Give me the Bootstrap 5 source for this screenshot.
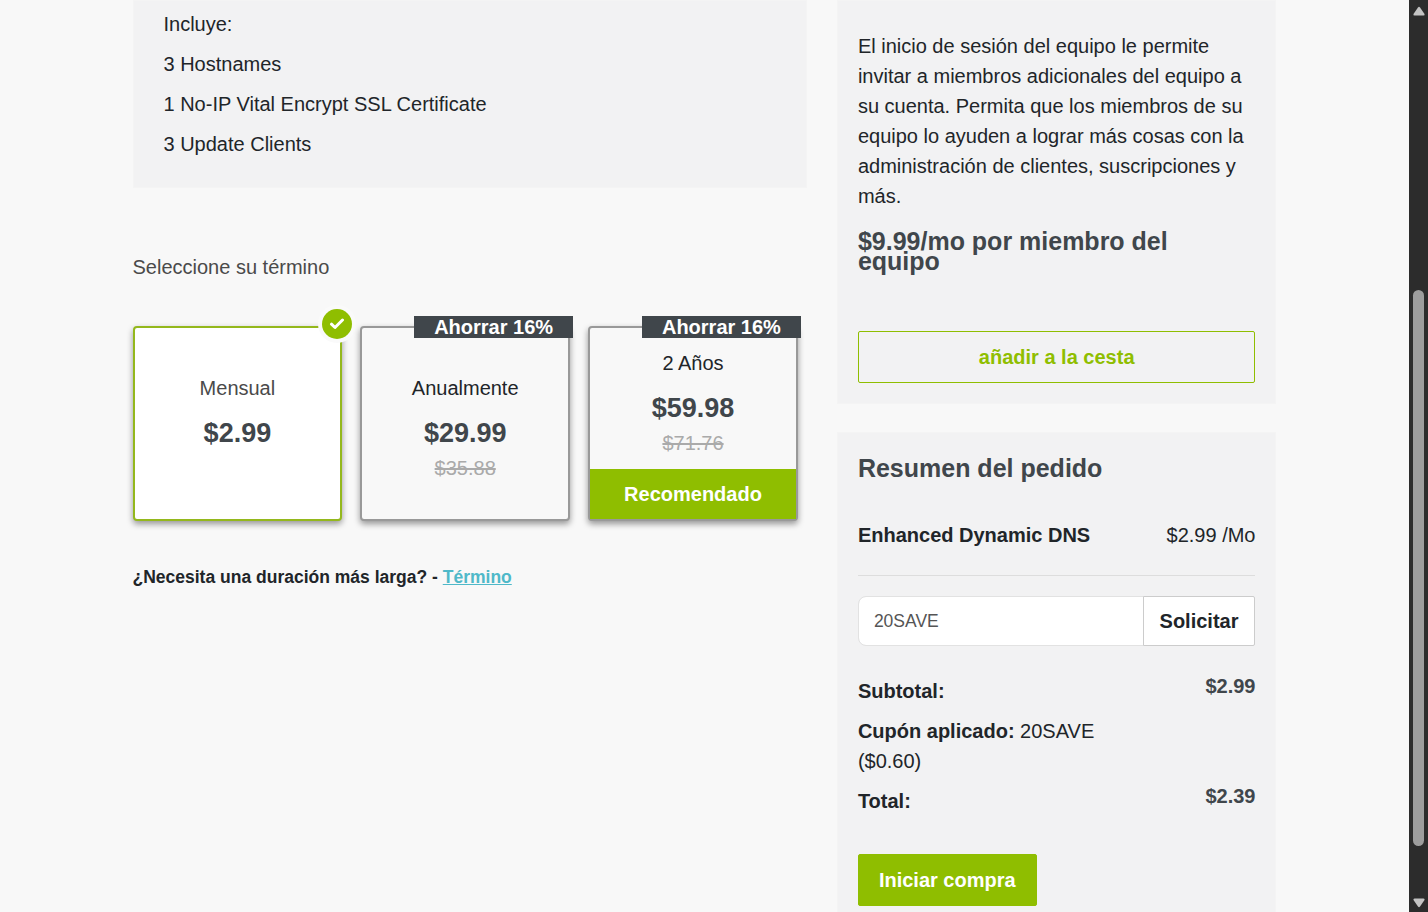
<!DOCTYPE html>
<html lang="es">
<head>
<meta charset="utf-8">
<meta name="viewport" content="width=device-width, initial-scale=1">
<title>Resumen del pedido</title>
<link href="https://cdn.jsdelivr.net/npm/bootstrap@5.3.0/dist/css/bootstrap.min.css" rel="stylesheet">
<style>
  :root { --leaf: #8fbe00; --slate: #40464b; --ink: #212529; }
  body { background: #f8f8f8; color: var(--ink); font: 20px/30px "Liberation Sans", Arial, sans-serif; }
  p { margin-bottom: 10px; }
  legend { font-size: 20px; }
  .checkout { max-width: 1174px; --bs-gutter-x: 30px; }
  .checkout > .row { --bs-gutter-x: 30px; }
  .main-column { width: 60%; }
  .side-column { width: 40%; }
  .panel { background: #f2f2f3; border: 1px solid #f4f4f4; }
  .plan-panel { padding: 8px 30px 18px; margin-bottom: 64px; }
  .side-panel { padding: 0 20px 20px; }
  .team-panel { padding-top: 30px; margin-bottom: 28px; }
  .order-panel { padding-top: 20px; }
  .slate { color: var(--slate); }
  .muted-ink { color: #4a4a4a; }
  .heading { font-size: 25px; line-height: 30px; font-weight: 700; color: var(--slate); margin: 0; }
  .team-price { line-height: 20px; padding: 10px 0 0; margin-bottom: 60px; }

  .terms { gap: 18px; padding-right: 9px; padding-top: 44px; }
  .term { flex: 1 1 0; min-height: 195px; border: 2px solid #999; border-radius: 4px;
          background: #f8f8f8; box-shadow: 0 3px 6px rgba(0,0,0,.4); cursor: pointer; }
  .term-simple { padding-top: 9px; }
  .term.chosen { border-color: #94b81c; background: #fff; }
  .term .price { font-size: 27px; font-weight: 700; line-height: 30px; color: var(--slate); margin: 15px 0 6px; }
  .term .was { color: #aaa; line-height: 29px; }
  .saving { top: -12px; right: -5px; padding: 0 20px; background: var(--slate); color: #fff; font-weight: 700; line-height: 22px; }
  .tick { top: -19px; right: -12px; width: 30px; height: 30px; border-radius: 50%; background: var(--leaf); box-shadow: 0 0 0 4px #fafafa; }
  .recommended { background: var(--leaf); color: #fff; font-weight: 700; line-height: 50px; }
  .longer { margin-top: 41px; }
  .longer a { color: #4fb9c9; }

  .btn { --bs-btn-font-size: 20px; --bs-btn-font-weight: 700; --bs-btn-line-height: 30px; --bs-btn-padding-y: 10px; --bs-btn-padding-x: 20px; --bs-btn-border-radius: 2px; }
  .btn-leaf { --bs-btn-color: #fff; --bs-btn-bg: var(--leaf); --bs-btn-border-color: var(--leaf); }
  .btn-leaf-line { --bs-btn-color: var(--leaf); --bs-btn-border-color: var(--leaf); }
  .btn-apply { --bs-btn-color: var(--ink); --bs-btn-bg: #fff; --bs-btn-border-color: #ccc; --bs-btn-padding-x: 16px; --bs-btn-padding-y: 9px; }
  .order-line { margin-top: 37px; padding-bottom: 25px; border-bottom: 1px solid #ddd; }
  .coupon { margin: 20px 0 25px; }
  .coupon .form-control { font-size: .875em; color: #555; padding: 9px 15px; border-color: #e2e2e2; border-radius: 8px; }
  .totals { margin-bottom: 33px; }
  .totals p { padding: 5px 0; margin: 0; }

  .scroll-rail { width: 19px; background: #2c2c2c; padding: 6px 0 4px; }
  .scroll-thumb { width: 11px; height: 61vh; border-radius: 6px; background: #9d9d9d; margin-bottom: 52px; }
</style>
</head>
<body>
<div class="d-flex vh-100 overflow-hidden">
  <main class="flex-grow-1 overflow-hidden">
    <div class="container-fluid checkout">
      <div class="row">
        <div class="main-column">
          <section class="panel plan-panel">
            <p>Incluye:</p>
            <p>3 Hostnames</p>
            <p>1 No-IP Vital Encrypt SSL Certificate</p>
            <p>3 Update Clients</p>
          </section>
          <fieldset>
            <legend class="mb-0 muted-ink">Seleccione su término</legend>
            <div class="terms d-flex text-center">
              <label class="term term-simple chosen position-relative d-flex flex-column justify-content-center">
                <input class="visually-hidden" type="radio" name="term" checked>
                <span class="tick position-absolute d-flex align-items-center justify-content-center">
                  <svg width="16" height="12" viewBox="0 0 16 12" fill="none" stroke="#fff" stroke-width="3" stroke-linecap="round" stroke-linejoin="round" aria-hidden="true"><path d="M2.5 6.2 6 9.5 13.5 2"/></svg>
                </span>
                <span class="muted-ink">Mensual</span>
                <span class="price">$2.99</span>
                <span class="was" aria-hidden="true">&nbsp;</span>
              </label>
              <label class="term term-simple position-relative d-flex flex-column justify-content-center">
                <input class="visually-hidden" type="radio" name="term">
                <span class="saving position-absolute">Ahorrar 16%</span>
                <span>Anualmente</span>
                <span class="price">$29.99</span>
                <del class="was">$35.88</del>
              </label>
              <label class="term position-relative d-flex flex-column">
                <input class="visually-hidden" type="radio" name="term">
                <span class="saving position-absolute">Ahorrar 16%</span>
                <span class="flex-grow-1 d-flex flex-column justify-content-center pt-2">
                  <span>2 Años</span>
                  <span class="price">$59.98</span>
                  <del class="was">$71.76</del>
                </span>
                <span class="recommended">Recomendado</span>
              </label>
            </div>
          </fieldset>
          <p class="longer small fw-bold">¿Necesita una duración más larga? - <a href="#">Término</a></p>
        </div>

        <div class="side-column">
          <section class="panel side-panel team-panel">
            <p>El inicio de sesión del equipo le permite invitar a miembros adicionales del equipo a su cuenta. Permita que los miembros de su equipo lo ayuden a lograr más cosas con la administración de clientes, suscripciones y más.</p>
            <h2 class="heading team-price">$9.99/mo por miembro del equipo</h2>
            <button class="btn btn-leaf-line w-100" type="button">añadir a la cesta</button>
          </section>

          <section class="panel side-panel order-panel">
            <h2 class="heading">Resumen del pedido</h2>
            <div class="order-line d-flex justify-content-between"><strong>Enhanced Dynamic DNS</strong><span>$2.99 /Mo</span></div>
            <form class="coupon input-group">
              <input class="form-control" type="text" value="20SAVE" aria-label="Cupón">
              <button class="btn btn-apply" type="button">Solicitar</button>
            </form>
            <div class="totals">
              <div class="d-flex justify-content-between"><p><strong>Subtotal:</strong></p><strong class="slate">$2.99</strong></div>
              <p class="w-75"><strong>Cupón aplicado:</strong> 20SAVE<br>($0.60)</p>
              <div class="d-flex justify-content-between"><p><strong>Total:</strong></p><strong class="slate">$2.39</strong></div>
            </div>
            <button class="btn btn-leaf" type="button">Iniciar compra</button>
          </section>
        </div>
      </div>
    </div>
  </main>
  <div class="scroll-rail flex-shrink-0 d-flex flex-column align-items-center" aria-hidden="true">
    <svg width="12" height="10" viewBox="0 0 12 10" fill="#c4c4c4"><path d="M5 1.500Q6 .2 7 1.500L11.500 8Q12 9.500 10.500 9.500H1.500Q0 9.500 .5 8Z"/></svg>
    <div class="scroll-thumb mt-auto"></div>
    <svg width="12" height="10" viewBox="0 0 12 10" fill="#c4c4c4"><path d="M5 8.500Q6 9.800 7 8.500L11.500 2Q12 .5 10.500 .5H1.500Q0 .5 .5 2Z"/></svg>
  </div>
</div>
<script src="https://cdn.jsdelivr.net/npm/bootstrap@5.3.0/dist/js/bootstrap.bundle.min.js"></script>
</body>
</html>
